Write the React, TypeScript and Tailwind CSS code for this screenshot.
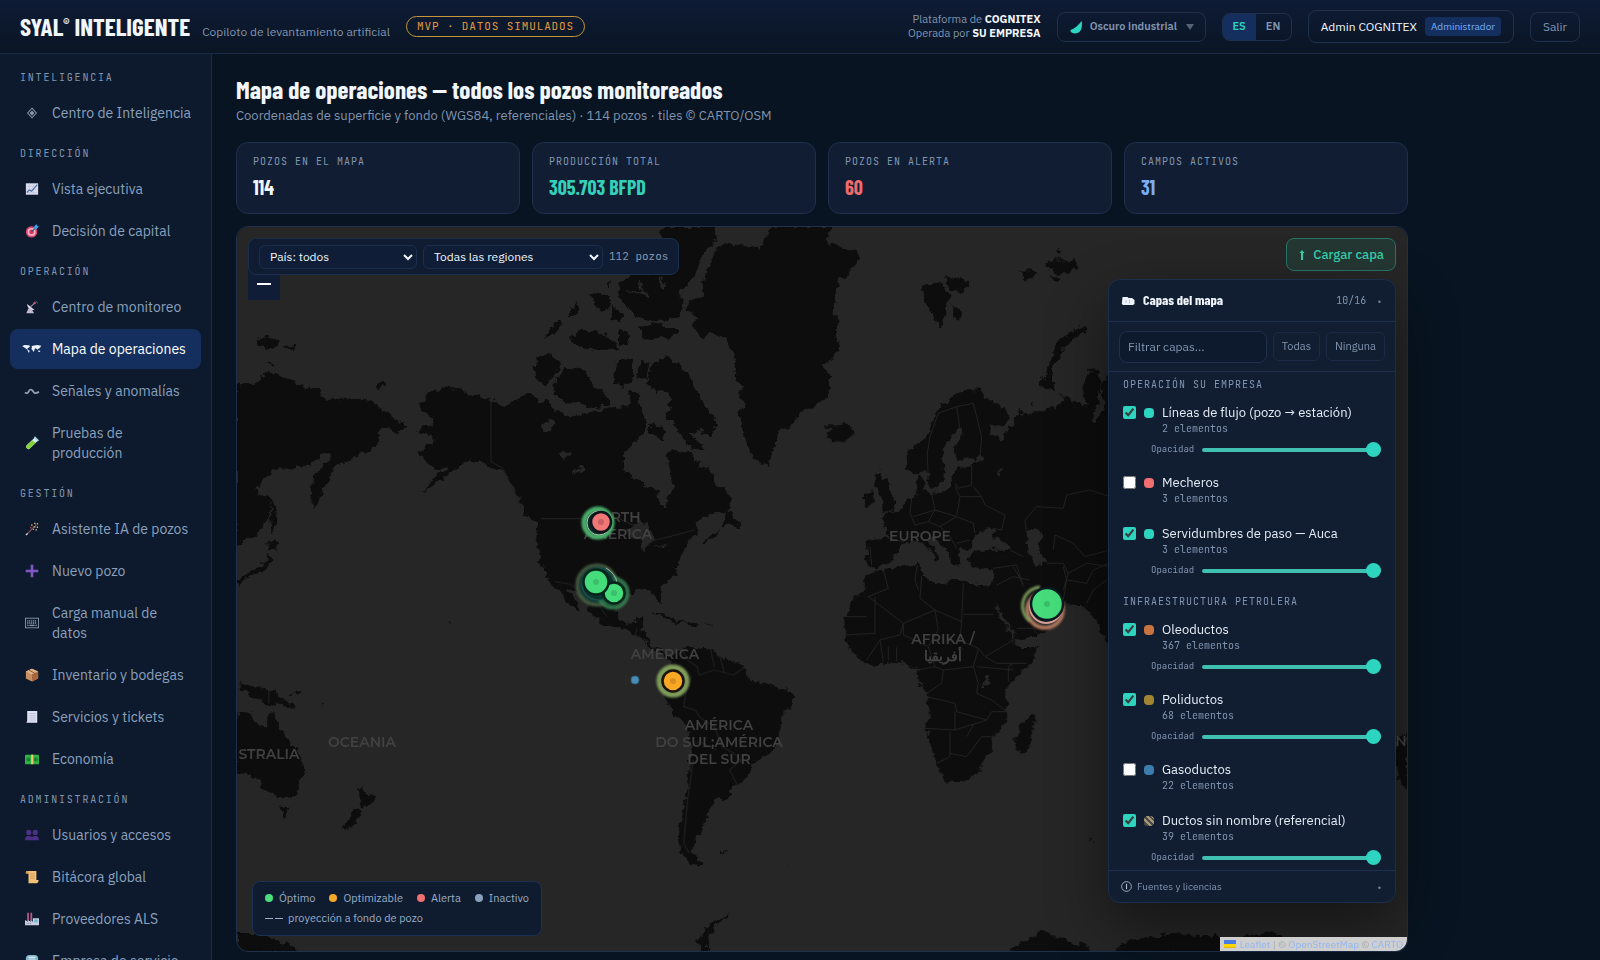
import React from 'react';

const sans = "font-['IBM_Plex_Sans','Roboto','Open_Sans',sans-serif]";
const mono = "font-['JetBrains_Mono','DejaVu_Sans_Mono','Liberation_Mono',monospace]";
const condensed = "font-['Barlow_Condensed','Roboto_Condensed','Liberation_Sans_Narrow','Roboto',sans-serif]";

/* ---------- Sidebar icons ---------- */

const icons: Record<string, React.ReactNode> = {
  diamond: (
    <g>
      <path d="M8 2.5 13 8 8 13.5 3 8Z" fill="none" stroke="#8494ab" strokeWidth="1.2" />
      <path d="M8 5 10.8 8 8 11 5.2 8Z" fill="#8494ab" />
    </g>
  ),
  chart: (
    <g>
      <rect x="1" y="1.5" width="14" height="13" fill="#dcdff0" />
      <path d="M1 5h14M1 8.500h14M1 12h14M5 1.500v13M9.500 1.500v13" stroke="#b9c0dc" strokeWidth=".6" />
      <path d="m2 12 3-3 2.500 1.500L14 3" fill="none" stroke="#4b6d9e" strokeWidth="1.300" />
    </g>
  ),
  target: (
    <g>
      <circle cx="7.500" cy="9" r="6.500" fill="#e5446d" />
      <circle cx="7.500" cy="9" r="4.500" fill="#f7b8c8" />
      <circle cx="7.500" cy="9" r="2.700" fill="#d8345f" />
      <path d="m7.500 9 4.500-4.500" stroke="#35506e" strokeWidth="1.200" />
      <path d="m10.500 5.500.5-3L13 .8l.6 1.600 1.700.6L13.500 5Z" fill="#3f9be6" stroke="#3f9be6" />
    </g>
  ),
  dish: (
    <g>
      <path d="M2.500 4.500c0 4.500 3.500 7.500 8.500 7L2.500 4.500Z" fill="#e0dae8" />
      <path d="M4 9.500 1.500 15h9L8 11Z" fill="#c4bbd2" />
      <path d="m6 8 5-4.500" stroke="#8f86a3" strokeWidth="1.300" />
      <circle cx="11" cy="3.500" r="1.400" fill="#c25a6b" />
      <path d="M12 1a4 4 0 0 1 2.500 3" stroke="#4d6281" fill="none" />
    </g>
  ),
  worldmap: (
    <g fill="#eaf1fb" transform="translate(-1.500 0) scale(1.150 1)">
      <path d="M-1.500 4.500 1 3.500l4 .2 1.500 1L5 6.500 3.500 7.500l1 1.500 1.500 1-.8 2.500-1-2-.6-2L1 6.500Z" />
      <path d="M8 4.500 10.500 4l3-.7 4 1-1 1.700-1 1.500-1 .2-.8 1.200-1.500-1.500-1-.2-.5 2.300-1 1.800-1-2.200L7.500 8l.6-1.500Z" />
      <path d="m14.500 9.800 2 .2-.3 1.500-1.700-.3Z" />
    </g>
  ),
  wave: <path d="M0 9.500c2 2 3.500.8 4.300-1.200S7.500 5.500 9 8s2.500 3.500 7 1" fill="none" stroke="#8fa0b8" strokeWidth="2" />,
  tube: (
    <g>
      <path d="M11.500 1.500 15 5 5.500 14.200a2.200 2.200 0 0 1-3.200 0l-.4-.4a2.200 2.200 0 0 1 0-3.200Z" fill="#d5ecef" />
      <path d="M8.500 4.800 12 8l-6.500 6.200a2.200 2.200 0 0 1-3.200 0l-.4-.4a2.200 2.200 0 0 1 0-3.200Z" fill="#86d13e" />
      <path d="m10.800 1 4.600 4.600" stroke="#9fd0e8" strokeWidth="1.800" />
    </g>
  ),
  wand: (
    <g>
      <path d="m1.500 14.500 9-9" stroke="#7a4b52" strokeWidth="1.500" />
      <path d="m1 15 2-2" stroke="#d4d4dc" strokeWidth="1.600" />
      <path d="M7 3.500h1.600M10.500 1.500h1.500M13.500 2.200H15M10 5.500h2M13.500 6h1.400M12 9h1.500M9 8.500h1" stroke="#f1c27a" strokeWidth="1.500" />
      <path d="M11.500 3.500h1.500M6 6.500h1.200" stroke="#d9576a" strokeWidth="1.300" />
    </g>
  ),
  plus: <path d="M8 .8v14.400M.8 8h14.400" stroke="#8057c4" strokeWidth="3" />,
  keyboard: (
    <g fill="none" stroke="#8a9bb2">
      <rect x=".5" y="2.500" width="15" height="11" />
      <path d="M2.500 5.500h11M2.500 8h11" strokeDasharray="1.400 .8" strokeWidth="1.500" />
      <path d="M2.500 10.700H4M5 10.700h6M12 10.700h1.500" strokeWidth="1.300" />
    </g>
  ),
  box: (
    <g>
      <path d="m8 .8 7 3.200v8L8 15.500 1 12V4Z" fill="#c98f63" />
      <path d="m8 .8 7 3.200L8 7.300 1 4Z" fill="#e0b28a" />
      <path d="M8 7.300 15 4v8L8 15.500Z" fill="#a8673f" />
      <path d="m4.500 2.500 6.500 3.300v2.500" stroke="#8a5234" fill="none" />
    </g>
  ),
  receipt: (
    <g>
      <path d="M2.500 1h11.500v13.500H1.500l1-2Z" fill="#dbe0f2" />
      <path d="M5 4h7M5 6.500h7M5 9h7M5 11.500h7" stroke="#b3bad2" strokeWidth=".9" />
    </g>
  ),
  money: (
    <g>
      <rect x="0" y="3" width="16" height="11" rx="1" fill="#2fb344" />
      <circle cx="4" cy="8.500" r="2.300" fill="#1c7f31" />
      <circle cx="12.300" cy="8.500" r="2.300" fill="#1c7f31" />
      <path d="M7 3h2.500v11H7Z" fill="#e8c86a" />
    </g>
  ),
  users: (
    <g fill="#4c2f86">
      <circle cx="4.300" cy="5" r="3" />
      <circle cx="11.700" cy="5" r="3" />
      <path d="M0 14c0-4 1.500-5 4.300-5C6 9 7.200 9.500 8 10.500 8.800 9.500 10 9 11.700 9c2.800 0 4.300 1 4.300 5Z" />
    </g>
  ),
  scroll: (
    <g>
      <path d="M1 2.500C1 1.500 2 1 3 1h10v10.500h2.500c0 2-.8 3.500-2 3.500H4V4H1Z" fill="#f3c078" />
      <path d="M6 4.500h5M6 7h5M6 9.500h5" stroke="#c98f4d" strokeWidth=".9" />
      <path d="M1 2.500C1 1.500 2 1 3 1s1.500 1 1 3H1Z" fill="#d99a55" />
    </g>
  ),
  factory: (
    <g>
      <path d="M2.500.8h2V10h-2ZM6.200.8h2V10h-2Z" fill="#b55c88" />
      <path d="M0 15V9l3.200 2V9l3.200 2V9L9 11V7h7v8Z" fill="#c9cfe0" />
      <path d="M10.500 8.500h4v3.500h-4Z" fill="#6fb9d8" />
      <path d="M2 13h5.500" stroke="#6b7390" strokeDasharray="1 1" />
    </g>
  ),
  globe: (
    <g>
      <rect x="1" y="1" width="14" height="14" rx="4" fill="#7fb9cf" />
      <path d="M4 4h8M4 7h8" stroke="#dfeaf0" strokeWidth="1.500" />
    </g>
  ),
};

const Icon: React.FC<{ name: string }> = ({ name }) => (
  <svg viewBox="0 0 16 16" className="w-[14px] h-[14px] overflow-visible" aria-hidden="true">
    {icons[name]}
  </svg>
);

const sections = [
  { title: 'INTELIGENCIA', items: [['diamond', 'Centro de Inteligencia']] },
  { title: 'DIRECCIÓN', items: [['chart', 'Vista ejecutiva'], ['target', 'Decisión de capital']] },
  {
    title: 'OPERACIÓN',
    items: [
      ['dish', 'Centro de monitoreo'],
      ['worldmap', 'Mapa de operaciones'],
      ['wave', 'Señales y anomalías'],
      ['tube', 'Pruebas de\nproducción'],
    ],
  },
  {
    title: 'GESTIÓN',
    items: [
      ['wand', 'Asistente IA de pozos'],
      ['plus', 'Nuevo pozo'],
      ['keyboard', 'Carga manual de\ndatos'],
      ['box', 'Inventario y bodegas'],
      ['receipt', 'Servicios y tickets'],
      ['money', 'Economía'],
    ],
  },
  {
    title: 'ADMINISTRACIÓN',
    items: [
      ['users', 'Usuarios y accesos'],
      ['scroll', 'Bitácora global'],
      ['factory', 'Proveedores ALS'],
      ['globe', 'Empresa de servicio'],
    ],
  },
];

const Sidebar: React.FC = () => (
  <nav className="w-[212px] shrink-0 overflow-hidden border-r border-[#1b2b45] bg-[#0d1a2d] px-[10px] pt-[5px] flex flex-col gap-[2px]">
    {sections.map((section) => (
      <React.Fragment key={section.title}>
        <div className={`${mono} shrink-0 px-[10px] pt-[11px] pb-[5px] text-[10px] leading-4 tracking-[0.18em] text-[#8195b0]`}>
          {section.title}
        </div>
        {section.items.map(([icon, label]) => {
          const active = label === 'Mapa de operaciones';
          return (
            <a
              key={label}
              href="#"
              className={`flex shrink-0 items-center gap-[10px] rounded-lg py-[10px] pr-1 pl-3 text-[14px] leading-5 ${
                active ? 'bg-[#142f5e] text-white' : 'text-[#8ba0bd]'
              }`}
            >
              <span className="flex w-5 shrink-0 justify-center">
                <Icon name={icon} />
              </span>
              <span className="whitespace-pre-line">{label}</span>
            </a>
          );
        })}
      </React.Fragment>
    ))}
  </nav>
);

/* ---------- Header ---------- */

const Header: React.FC = () => (
  <header className="flex h-[54px] shrink-0 items-center gap-4 border-b border-[#1b2b45] bg-linear-to-b from-[#0e1b35] to-[#0a1524] px-5">
    <div className="flex items-baseline gap-3 pb-[2px]">
      <span className={`${condensed} text-[25px] leading-8 font-bold text-[#f1f6fd]`}>
        SYAL<sup className="top-[-8px] text-[14px]">®</sup> INTELIGENTE
      </span>
      <span className="text-[12px] text-[#8195b0]">Copiloto de levantamiento artificial</span>
    </div>
    <span className={`${mono} rounded-full border border-[#c8963a] px-[10px] text-[11px] leading-[19px] tracking-[0.08em] text-[#e09a3e]`}>
      MVP · DATOS SIMULADOS
    </span>
    <div className="ml-auto flex items-center gap-4">
      <div className="pb-[2px] text-right text-[11px] leading-[14px] text-[#8195b0]">
        Plataforma de <b className="text-[#f1f6fd]">COGNITEX</b>
        <br />
        Operada por <b className="text-[#f1f6fd]">SU EMPRESA</b>
      </div>
      <label className="flex h-[30px] items-center rounded-lg border border-[#1f304c] px-[11px]">
        <svg viewBox="0 0 14 14" className="mr-[7px] h-[14px] w-[14px]" aria-hidden="true">
          <path d="M12.500.8C13.700 5 13 13.500 6.500 13.500 3 13.500 1.200 12 1.500 10 4 9.500 10 5.500 12.500.8Z" fill="#2dd4bf" />
        </svg>
        <select aria-label="Tema" className="appearance-none bg-transparent text-[11px] font-semibold text-[#8195b0]">
          <option>Oscuro industrial</option>
        </select>
        <svg viewBox="0 0 8 6" className="ml-2 h-[6px] w-2" aria-hidden="true">
          <path d="M0 0h8L4 6Z" fill="#566377" />
        </svg>
      </label>
      <div className="flex h-7 overflow-hidden rounded-lg border border-[#1f304c] text-[11px] font-semibold">
        <button className="w-[33px] bg-[#142f5e] text-[#2dd4bf]">ES</button>
        <button className="w-[35px] text-[#8195b0]">EN</button>
      </div>
      <button className="flex h-[33px] items-center gap-2 rounded-lg border border-[#1f304c] px-3 text-[12px] text-[#f1f6fd]">
        Admin COGNITEX
        <span className="rounded bg-[#142f5e] px-[6px] text-[10px] leading-[19px] text-[#7cacf8]">Administrador</span>
      </button>
      <button className="h-[30px] rounded-lg border border-[#1f304c] px-3 text-[12px] text-[#8195b0]">Salir</button>
    </div>
  </header>
);

/* ---------- Map drawing ---------- */

interface Tile {
  transform: string;
  land: string[];
  water?: string[];
  borders?: string[];
}

const tiles: Tile[] = [
  {
    transform: 'translate(236 220) scale(.3333)',
    land: [
      // eastern Siberia, Kamchatka, Japan
      'M0 495 30 490 80 485 85 460 120 458 165 480 200 500 245 505 265 535 280 560 275 540 345 535 400 540 440 570 480 600 515 618 490 638 440 622 428 650 425 680 380 700 345 720 300 735 285 770 265 800 236 868 228 830 230 780 250 750 290 700 262 698 230 730 190 745 120 745 85 775 55 810 80 825 105 835 95 900 60 950 15 970 0 975Z',
      'M106 835 118 860 120 930 108 945 104 900Z',
      'M92 968 128 965 118 990 95 990ZM98 995 105 1020 85 1052 40 1068 5 1100 0 1078 50 1050 85 1030Z',
      'M65 355 90 348 130 358 128 380 100 388 68 380ZM148 374 180 380 170 390 150 384ZM95 425 120 432 112 440ZM420 497 440 487 452 494 430 504Z',
      // Alaska and Canada mainland
      'M550 562 575 520 635 500 700 520 765 540 810 555 840 540 875 520 910 540 940 545 960 570 1000 590 1050 580 1100 570 1140 560 1175 560 1190 540 1170 520 1200 515 1210 560 1230 600 1225 640 1195 665 1165 700 1160 740 1185 770 1230 800 1265 810 1270 850 1290 865 1300 830 1315 800 1305 760 1290 705 1310 690 1340 695 1370 700 1380 725 1410 750 1417 735 1440 790 1488 835 1480 870 1440 880 1395 890 1370 930 1335 990 1320 1020 1304 1050 1280 1080 1270 1110 960 1110 920 1040 905 1000 905 910 870 880 850 830 820 780 790 745 740 730 700 715 670 740 640 765 560 815 600 770 640 740 600 750 575 730 550 700 570 680 590 670 590 650 545 632 570 615 600 610 580 590Z',
      'M1473 868 1517 920 1462 915ZM1400 965 1450 930 1440 948 1395 975Z',
      // Arctic archipelago
      'M905 410 935 402 970 430 965 455 930 495 895 470Z',
      'M950 490 990 440 1050 450 1075 500 1110 520 1125 555 1080 565 1020 550 990 550 960 520Z',
      'M1000 350 1045 330 1090 340 1120 350 1150 385 1100 390 1040 385 1010 370Z',
      'M925 345 955 310 980 298 975 325 940 350ZM1000 265 1028 250 1025 280 1000 292ZM1068 220 1110 225 1125 260 1100 275 1075 255ZM1130 260 1160 280 1150 305 1120 290ZM1110 185 1125 180 1125 205Z',
      'M1150 330 1180 335 1175 375 1150 370ZM1210 320 1250 310 1330 330 1300 355 1220 355Z',
      'M1140 425 1185 420 1190 470 1160 500 1135 490ZM1215 420 1240 430 1230 480 1205 470ZM1245 430 1290 420 1300 480 1260 520 1235 490Z',
      'M1270 40 1290 22 1432 22 1445 55 1410 90 1390 130 1360 190 1330 215 1345 250 1330 290 1270 305 1200 290 1150 230 1145 195 1200 160 1290 155 1300 90Z',
      'M1275 410 1330 430 1370 490 1395 540 1440 610 1425 650 1390 630 1360 640 1412 690 1370 690 1330 640 1310 600 1290 590 1310 540 1270 490Z',
      'M1240 610 1280 625 1285 660 1240 640Z',
    ],
    water: [
      'M915 615 940 600 960 610 950 630 920 635ZM970 700 1000 690 1008 705 980 716Z',
      'M1010 755 1045 740 1050 746 1015 762ZM1120 830 1130 850 1140 870 1130 850Z',
      'M1205 180 1212 178 1235 230 1228 235ZM1270 170 1278 168 1290 210 1282 212ZM1160 215 1200 210 1240 220 1200 220Z',
      'M1170 930 1210 900 1245 930 1265 960 1235 975 1220 1000 1215 960 1180 945ZM1240 985 1290 975 1285 985Z',
    ],
    borders: ['M765 540V725L800 745 860 870', 'M915 896H1150L1200 920 1260 960 1320 945 1375 930'],
  },
  {
    transform: 'translate(520 490) scale(.3333)',
    land: [
      'M0 30 20 70 50 100 60 120 55 190 75 240 105 275 125 310 165 360 180 364 150 310 122 280 150 290 180 310 205 340 215 370 240 395 290 410 330 425 345 435 365 445 390 472 425 480 400 470 390 460 380 430 355 420 370 410 375 378 350 380 345 400 320 405 295 385 290 350 300 315 335 315 345 300 380 300 405 310 415 342 428 342 418 310 420 290 445 270 470 250 465 240 480 210 500 160 530 130 520 60 300 40Z',
      'M395 368 430 370 470 392 500 395 475 400 440 385ZM500 398 540 400 530 410 505 408ZM560 406 572 407 566 411Z',
    ],
    borders: ['M105 275 150 282 190 310 240 350 260 380', 'M345 435 352 415M370 445 388 455'],
  },
  {
    transform: 'translate(236 560) scale(.3827 .3333)',
    land: [
      'M1092 258 1120 275 1140 290 1165 265 1180 258 1240 268 1260 290 1300 305 1330 320 1340 355 1400 375 1450 400 1455 430 1425 470 1420 540 1400 575 1355 600 1345 640 1310 675 1290 670 1290 710 1250 720 1245 745 1230 760 1225 800 1205 830 1190 870 1222 918 1190 915 1165 880 1155 840 1170 740 1185 640 1190 560 1180 510 1150 470 1120 410 1130 370 1115 340 1140 330 1135 300Z',
      'M0 458 40 460 50 490 80 500 95 450 110 500 150 560 178 600 180 630 150 710 110 712 70 680 50 650 0 640ZM115 740 140 742 130 770Z',
      'M10 370 40 378 90 388 120 410 155 445 120 436 80 430 40 405 10 385ZM140 405 172 392 160 404Z',
      'M325 678 345 705 365 710 340 742 326 735ZM318 745 332 752 300 802 276 805 290 780Z',
      'M0 1120 60 1120 130 1150 165 1175H0Z',
      'M1220 1175 1205 1140 1240 1090 1295 1058 1250 1100 1230 1140 1235 1175ZM1265 870 1282 872 1268 878ZM555 182 562 187 556 190ZM225 435 232 440 228 442ZM1438 905 1448 915 1442 912Z',
    ],
    borders: [
      'M1165 265 1180 300 1205 320 1210 345 1250 330 1300 345 1330 320M1190 348 1175 400 1170 440 1200 450 1215 475 1250 500 1270 560 1300 580 1320 600 1290 630 1310 675',
      'M1190 560 1210 545 1255 570M1195 600 1180 720 1170 850 1185 880M1240 268 1250 320M1265 290 1275 335',
      'M86 388V430',
    ],
  },
  {
    transform: 'translate(680 220) scale(.3333)',
    land: [
      // Greenland
      'M275 22H450L445 55 430 65 470 75 500 90 535 95 530 130 495 165 475 185 465 230 460 280 480 300 465 330 480 380 450 420 420 440 450 470 450 510 440 530 400 565 360 575 345 610 295 635 280 690 262 738 220 710 200 670 185 630 180 580 195 550 170 520 190 500 170 480 160 400 140 360 100 340 60 350 35 310 60 290 18 270 25 245 75 225 70 180 90 140 110 80 150 70 200 75 245 85 255 50Z',
      'M435 620 455 632 440 650 475 670 517 645 515 620 490 612 460 620Z',
      'M728 195 785 188 810 230 795 280 778 327 755 280 735 240ZM795 170 865 180 850 218 810 208ZM815 250 846 285 825 298Z',
      'M1020 155 1060 150 1070 165 1045 178ZM1100 130 1130 112 1160 130 1190 118 1192 145 1140 165 1110 150ZM1115 170 1140 175 1125 185ZM1130 90H1140V95H1130Z',
      'M1080 490 1110 430 1130 370 1180 330 1215 318 1222 332 1170 365 1140 400 1120 440 1115 480 1125 510 1095 505Z',
      'M580 760 602 755 620 790 648 850 640 870 600 875 610 840 590 800ZM552 825 580 815 585 850 555 860Z',
      // Europe and Russia
      'M680 700 700 680 740 650 760 600 780 560 820 530 860 508 900 510 905 530 960 555 990 590 975 620 935 610 930 640 960 662 975 640 1000 610 1015 570 1030 590 1080 570 1130 560 1160 545 1135 520 1180 545 1225 560 1205 510 1225 455 1255 450 1262 500 1250 560 1230 605 1250 610 1270 570 1265 490 1300 450V1130H900L945 1092 943 1045 880 1040 865 1020 880 995 940 990 990 990 972 962 930 945 945 925 900 930 880 950 870 985 835 990 840 1030 820 1035 800 990 760 945 738 958 782 1012 760 1032 768 1010 728 970 700 960 660 972 650 1000 620 1030 590 1045 560 1035 558 965 625 955 620 920 598 900 620 880 660 870 680 840 712 820 705 785 720 765 735 780 730 812 755 822 790 815 820 800 815 775 830 745 880 735 900 722 880 712 830 722 825 690 850 645 845 625 825 635 785 690 792 740 790 775 765 812 745 795 738 745 705 768 682 745Z',
      'M1048 548 1060 545 1058 558Z',
      'M552 1130 560 1100 590 1050 620 1055 720 1035 725 1070 760 1090 800 1090 830 1080 900 1100 940 1095V1130Z',
    ],
    water: ['M1040 940 1080 920 1090 950 1072 980 1100 1030 1065 1037 1050 1000 1038 970ZM890 705 912 712 905 728 892 720ZM955 750 965 752 962 768Z'],
    borders: [
      'M745 780 742 700 750 650 775 580 830 560 840 625M830 560 880 550 890 590 905 650 900 715M840 745 875 735 875 795 835 805 825 790',
      'M695 835 690 880 705 915M755 822 765 870 700 890M765 870 830 890 840 830 825 800M840 830 905 830 915 855 975 885 965 930 940 925M830 890 880 910 885 940M705 915 745 905 765 870M745 905 780 920 830 890M905 830 880 800M625 955 670 965M570 980 575 1035M780 920 810 950 830 985',
      'M1040 940 1035 900 1070 860 1150 865 1160 825 1230 810 1290 830M1100 1030 1150 1030 1165 1060 1150 1110M1120 990 1125 945 1180 970 1215 1010 1290 990M990 990 1030 1010M940 1045 1010 1035 1030 1100M870 960 830 970M1165 1060 1220 1030 1290 1040',
      'M712 1035 705 1080 715 1110',
    ],
  },
  {
    transform: 'translate(800 560) scale(.3333)',
    land: [
      'M195 60 200 40 225 35 250 30 330 15 360 15 365 50 400 65 440 80 450 60 490 70 555 80 575 110 600 170 640 240 650 262 715 262 690 310 650 350 615 390 620 430 620 490 575 530 575 570 550 600 540 630 500 660 435 670 420 620 400 590 395 550 375 505 390 460 380 400 355 365 355 330 325 315 290 305 215 320 180 300 145 260 130 220 135 170 160 120 190 90Z',
      'M580 25H940V290L905 210 880 170 850 135 800 132 760 112 700 85 670 72 700 110 722 128 795 150 770 195 715 225 650 245 630 200 600 150 567 95 580 60Z',
      'M700 465 706 480 680 577 655 580 646 550 655 500Z',
      'M625 1180 660 1145 700 1135 730 1110 760 1125 800 1145 865 1155 870 1180ZM865 838 876 840 868 846Z',
      'M940 1180 980 1145 1130 1118 1160 1128 1250 1125 1280 1140 1400 1118 1480 1135 1700 1180Z',
      // east coast of Asia past the layer panel
      'M1788 535 1822 520V690L1800 660 1788 620Z',
    ],
    water: ['M545 360 570 352 572 372 550 376Z'],
    borders: [
      'M205 110 265 85 250 30M205 110 310 190 405 150 360 115 365 50M225 110V220L135 225M135 170H200M310 190 300 225 240 240 200 300M405 150 485 185 490 70M490 163 580 163M485 185 480 240 535 265 555 290 640 240',
      'M405 150 415 210 385 260 405 320 355 330M310 190 310 225 385 260M405 320 430 330 520 320 535 265M430 330 425 370 380 400M520 320 535 370 530 400 575 420 620 455H575L560 480 470 455 465 430 380 410M465 455 465 510 375 505M465 510 545 485 560 480M450 515V590L410 610M450 580 500 590 545 530 575 530M625 365V320L640 310M530 320 640 330M555 290 590 310 680 310M500 530 520 495M240 240 250 305M265 260V300M290 262V305',
      'M590 75 640 50 690 60M650 205 700 205 715 225M670 72 640 20M790 120 800 60 790 20M800 60 860 70 880 30 925 10M860 130 880 90 920 60',
    ],
  },
];

const mapLabels = [
  { x: 614, y: 522, text: 'NORTH' },
  { x: 618, y: 539, text: 'AMERICA' },
  { x: 665, y: 659, text: 'AMERICA' },
  { x: 920, y: 541, text: 'EUROPE' },
  { x: 943, y: 644, text: 'AFRIKA /' },
  { x: 943, y: 661, text: 'أفريقيا' },
  { x: 719, y: 730, text: 'AMÉRICA' },
  { x: 719, y: 747, text: 'DO SUL;AMÉRICA' },
  { x: 719, y: 764, text: 'DEL SUR' },
  { x: 362, y: 747, text: 'OCEANIA' },
  { x: 269, y: 759, text: 'STRALIA' },
  { x: 1401, y: 746, text: 'N' },
];

const WorldMap: React.FC = () => (
  <svg viewBox="237 227 1170 724" preserveAspectRatio="xMidYMid slice" className="block h-full w-full bg-[#262626]" role="img" aria-label="Mapa mundial de pozos">
    <defs>
      <filter id="coast" x="0" y="0" width="100%" height="100%">
        <feTurbulence type="fractalNoise" baseFrequency=".14" numOctaves="3" seed="4" />
        <feDisplacementMap in="SourceGraphic" scale="9" xChannelSelector="R" yChannelSelector="G" />
      </filter>
      <filter id="glow" x="-30%" y="-30%" width="160%" height="160%">
        <feGaussianBlur stdDeviation="1" />
      </filter>
    </defs>
    <g filter="url(#coast)">
      {tiles.map((tile) => (
        <g key={tile.transform} transform={tile.transform}>
          {tile.land.map((d) => <path key={d} d={d} fill="#090909" />)}
        </g>
      ))}
      {tiles.map((tile) => (
        <g key={tile.transform} transform={tile.transform}>
          {tile.water?.map((d) => <path key={d} d={d} fill="#262626" />)}
        </g>
      ))}
    </g>
    {tiles.map((tile) => (
      <g key={tile.transform} transform={tile.transform}>
        {tile.borders?.map((d) => <path key={d} d={d} fill="none" stroke="#232323" strokeWidth="3" />)}
      </g>
    ))}
    <g className="font-['Montserrat','Inter',sans-serif] text-[14px] font-semibold" fill="#414141" textAnchor="middle">
      {mapLabels.map((l) => <text key={`${l.x}-${l.y}`} x={l.x} y={l.y}>{l.text}</text>)}
    </g>
    {/* Canada */}
    <circle cx="598" cy="523" r="14" fill="#164a35" stroke="#4aad6a" strokeWidth="5" filter="url(#glow)" />
    <circle cx="599" cy="523" r="12" fill="#0f2a22" stroke="#a9c9b0" strokeWidth="1" />
    <circle cx="601" cy="522" r="10" fill="#f27777" stroke="#10151d" strokeWidth="2.500" />
    <circle cx="601" cy="522" r="3" fill="#c95f62" />
    {/* Permian and Gulf */}
    <circle cx="597" cy="585" r="20" fill="#12403a" stroke="#4b6344" strokeWidth="3" opacity=".9" filter="url(#glow)" />
    <circle cx="613" cy="593" r="15" fill="#1d5a3c" stroke="#3a8453" strokeWidth="3" opacity=".9" filter="url(#glow)" />
    <circle cx="598" cy="584" r="16" fill="#0d332f" stroke="#175148" strokeWidth="1.500" />
    <path d="M606 568q10 6 11 15" fill="none" stroke="#9bb9ae" />
    <circle cx="614" cy="593" r="10.500" fill="#45dd7c" stroke="#07251b" strokeWidth="2.500" />
    <circle cx="614" cy="593" r="3" fill="#3bbd6a" />
    <circle cx="596" cy="582" r="12.500" fill="#45dd7c" stroke="#07251b" strokeWidth="2.500" />
    <circle cx="596" cy="582" r="3" fill="#3bbd6a" />
    {/* Ecuador */}
    <circle cx="673" cy="681" r="14" fill="#58653a" stroke="#7f9d5a" strokeWidth="5" filter="url(#glow)" />
    <circle cx="673" cy="681" r="10.500" fill="#f9a825" stroke="#1a1210" strokeWidth="2.500" />
    <circle cx="673" cy="681" r="3" fill="#d98e1e" />
    <circle cx="635" cy="680" r="4" fill="#4a8db5" stroke="#336a8c" />
    {/* Gulf states */}
    <circle cx="1045" cy="610" r="18" fill="#182c2a" stroke="#b77c62" strokeWidth="3.500" filter="url(#glow)" />
    <path d="M1030 621a19 19 0 0 1 10-34" fill="none" stroke="#7d9c5b" strokeWidth="3" filter="url(#glow)" />
    <circle cx="1046" cy="607" r="16" fill="none" stroke="#d99a94" strokeWidth="2" />
    <circle cx="1047" cy="604" r="16" fill="#45dd7c" stroke="#0b1a22" strokeWidth="2.500" />
    <circle cx="1047" cy="604" r="3" fill="#3bbd6a" />
  </svg>
);

/* ---------- Layer panel ---------- */

interface Layer {
  name: string;
  count: number;
  color: string;
  on: boolean;
}

const layerGroups: { title: string; layers: Layer[] }[] = [
  {
    title: 'OPERACIÓN SU EMPRESA',
    layers: [
      { name: 'Líneas de flujo (pozo → estación)', count: 2, color: 'bg-[#2dd4bf]', on: true },
      { name: 'Mecheros', count: 3, color: 'bg-[#f06f6f]', on: false },
      { name: 'Servidumbres de paso — Auca', count: 3, color: 'bg-[#2dd4bf]', on: true },
    ],
  },
  {
    title: 'INFRAESTRUCTURA PETROLERA',
    layers: [
      { name: 'Oleoductos', count: 367, color: 'bg-[#c8743f]', on: true },
      { name: 'Poliductos', count: 68, color: 'bg-[#a08632]', on: true },
      { name: 'Gasoductos', count: 22, color: 'bg-[#3d7dae]', on: false },
      {
        name: 'Ductos sin nombre (referencial)',
        count: 39,
        color: 'bg-[repeating-linear-gradient(45deg,#a89878_0_2px,#4d4b48_2px_4px)]',
        on: true,
      },
    ],
  },
];

const slider =
  'm-0 h-1 min-w-0 flex-1 appearance-none rounded-full bg-[#3fc0b0] [&::-webkit-slider-thumb]:h-[15px] [&::-webkit-slider-thumb]:w-[15px] [&::-webkit-slider-thumb]:appearance-none [&::-webkit-slider-thumb]:rounded-full [&::-webkit-slider-thumb]:bg-[#2dd4bf]';

const LayerItem: React.FC<{ layer: Layer }> = ({ layer }) => (
  <div className={`pt-[6px] ${layer.on ? 'pb-[9px]' : 'pb-3'}`}>
    <label className="flex items-center gap-2 text-[13px] leading-[17px] text-[#e4ecf7]">
      <input type="checkbox" defaultChecked={layer.on} className="m-0 h-[13px] w-[13px] shrink-0 accent-[#2dd4bf]" />
      <span className={`h-[10px] w-[10px] shrink-0 rounded ${layer.color}`} />
      <span className="whitespace-nowrap">{layer.name}</span>
    </label>
    <div className={`${mono} pl-[39px] text-[10px] leading-4 text-[#8195b0]`}>{layer.count} elementos</div>
    {layer.on && (
      <label className={`${mono} mt-[3px] flex h-[19px] items-center gap-2 pl-7 text-[9px] text-[#8195b0]`}>
        Opacidad
        <input type="range" defaultValue={100} className={slider} />
      </label>
    )}
  </div>
);

const LayerPanel: React.FC = () => (
  <aside className="absolute top-[52px] right-[11px] bottom-[48px] flex w-[288px] flex-col rounded-xl border border-[#1b2f4c] bg-[#111d30] shadow-[0_24px_60px_rgba(0,0,0,0.45)]">
    <div className="flex h-[42px] shrink-0 items-center border-b border-[#1f304c] px-3">
      <svg viewBox="0 0 14 10" className="mr-2 h-[10px] w-[14px]" aria-hidden="true">
        <path d="M1.500 1h5l1 1h3.500l2.500 2v4l-1.500 1H2L.8 8Z" fill="#eef4fc" />
        <path d="M5 4v3M8.500 3.500v4" stroke="#b7c4d8" />
      </svg>
      <h2 className={`${condensed} pb-[2px] text-[14px] font-bold text-[#f1f6fd]`}>Capas del mapa</h2>
      <span className={`${mono} ml-auto text-[10px] text-[#8195b0]`}>10/16</span>
      <span className="mr-[2px] ml-3 text-[8px] text-[#8195b0]">▪</span>
    </div>
    <div className="flex h-[50px] shrink-0 items-center gap-[6px] border-b border-[#1f304c] px-[10px]">
      <input
        type="text"
        aria-label="Filtrar capas"
        placeholder="Filtrar capas..."
        className="h-8 min-w-0 flex-1 rounded-lg border border-[#1f304c] bg-[#0d1a2d] px-2 text-[12px] placeholder:text-[#8195b0]"
      />
      <button className="h-[29px] rounded-md border border-[#1b2b45] px-2 text-[11px] text-[#8195b0]">Todas</button>
      <button className="h-[29px] rounded-md border border-[#1b2b45] px-2 text-[11px] text-[#8195b0]">Ninguna</button>
    </div>
    <div className="min-h-0 flex-1 overflow-hidden px-[14px]">
      {layerGroups.map((group) => (
        <section key={group.title}>
          <h3 className={`${mono} py-[5px] text-[10px] leading-4 tracking-[0.1em] text-[#8195b0]`}>{group.title}</h3>
          {group.layers.map((layer) => <LayerItem key={layer.name} layer={layer} />)}
        </section>
      ))}
    </div>
    <div className="flex h-8 shrink-0 items-center border-t border-[#1f304c] px-3 text-[10px] text-[#8195b0]">
      <svg viewBox="0 0 12 12" className="mr-[5px] h-[11px] w-[11px]" fill="none" stroke="#a9b8cc" aria-hidden="true">
        <circle cx="6" cy="6" r="5.300" />
        <path d="M6 3v6" strokeWidth="1.300" />
      </svg>
      Fuentes y licencias
      <span className="mr-[2px] ml-auto text-[8px]">▪</span>
    </div>
  </aside>
);

/* ---------- Page ---------- */

const stats = [
  { label: 'POZOS EN EL MAPA', value: '114', color: 'text-[#f1f6fd]' },
  { label: 'PRODUCCIÓN TOTAL', value: '305.703 BFPD', color: 'text-[#34d0ba]' },
  { label: 'POZOS EN ALERTA', value: '60', color: 'text-[#f06b6b]' },
  { label: 'CAMPOS ACTIVOS', value: '31', color: 'text-[#7cacf8]' },
];

const legend = [
  ['Óptimo', 'bg-[#4ade80]'],
  ['Optimizable', 'bg-[#f5a92a]'],
  ['Alerta', 'bg-[#f06f6f]'],
  ['Inactivo', 'bg-[#8ba0bd]'],
];

const mapSelect = 'h-6 rounded-md border border-[#1b2f4c] bg-[#0f1e36] px-[6px] text-[12px] text-[#f1f6fd]';

const MapCard: React.FC = () => (
  <div className="relative mt-3 h-[calc(100vh-234px)] min-h-[480px] rounded-xl border border-[#1f304c]">
    <div className="h-full overflow-hidden rounded-xl">
      <WorldMap />
    </div>
    <button aria-label="Alejar" className="absolute top-[41px] left-[11px] h-8 w-8 bg-[#0f1e36] text-white">
      <svg viewBox="0 0 14 2" className="mx-auto h-[2px] w-[14px]"><path d="M0 1h14" stroke="currentColor" strokeWidth="2" /></svg>
    </button>
    <div className="absolute top-[11px] left-[11px] flex h-[37px] items-center gap-[6px] rounded-lg border border-[#1b2f4c] bg-[#0f1c31] px-[10px]">
      <select aria-label="País" className={`${mapSelect} w-[158px]`}>
        <option>País: todos</option>
      </select>
      <select aria-label="Región" className={`${mapSelect} w-[180px]`}>
        <option>Todas las regiones</option>
      </select>
      <span className={`${mono} text-[11px] text-[#8195b0]`}>112 pozos</span>
    </div>
    <button className="absolute top-[11px] right-[11px] flex h-[33px] items-center gap-[7px] rounded-lg border border-[#267565] bg-[#253733] px-[11px] text-[13px] font-medium text-[#34d0ac]">
      <svg viewBox="0 0 8 12" className="h-3 w-2" aria-hidden="true"><path d="M4 1 6.500 4H5v7H3V4H1.500Z" fill="currentColor" /></svg>
      Cargar capa
    </button>
    <LayerPanel />
    <div className="absolute bottom-[15px] left-[15px] rounded-lg border border-[#1b3252] bg-[#0f1c30] px-3 pt-[6px] pb-[7px] text-[11px] leading-5 text-[#9badc6]">
      <div className="flex gap-[14px]">
        {legend.map(([label, color]) => (
          <span key={label} className="flex items-center gap-[6px]">
            <span className={`h-2 w-2 rounded-full ${color}`} />
            {label}
          </span>
        ))}
      </div>
      <div className="flex items-center gap-[5px]">
        <span className="flex gap-[2px]">
          <span className="h-px w-2 bg-[#9badc6]" />
          <span className="h-px w-2 bg-[#9badc6]" />
        </span>
        proyección a fondo de pozo
      </div>
    </div>
    <div className="absolute right-0 bottom-0 flex h-[14px] items-center gap-1 rounded-br-xl bg-[#cfcfcf] px-1 text-[10px] text-[#a5a9b0]">
      <svg viewBox="0 0 12 8" className="h-2 w-3" aria-hidden="true">
        <path fill="#4c7be1" d="M0 0h12v4H0z" />
        <path fill="#ffd500" d="M0 4h12v3H0z" />
        <path fill="#e0bc00" d="M0 7h12v1H0z" />
      </svg>
      <span>
        <a href="#" className="text-[#8fb6f2]">Leaflet</a> | © <a href="#" className="text-[#8fb6f2]">OpenStreetMap</a> ©{' '}
        <a href="#" className="text-[#8fb6f2]">CARTO</a>
      </span>
    </div>
  </div>
);

export default function App() {
  return (
    <div className={`${sans} flex h-screen flex-col overflow-hidden bg-[#081421] text-[#e4ecf7]`}>
      <Header />
      <div className="flex min-h-0 flex-1">
        <Sidebar />
        <main className="min-w-0 flex-1 overflow-hidden">
          <div className="max-w-[1220px] px-6 pt-[19px]">
            <h1 className={`${condensed} text-[25px] leading-8 font-bold text-[#f1f6fd]`}>
              Mapa de operaciones — todos los pozos monitoreados
            </h1>
            <p className="mt-px text-[13px] leading-5 text-[#8195b0]">
              Coordenadas de superficie y fondo (WGS84, referenciales) · 114 pozos · tiles © CARTO/OSM
            </p>
            <div className="mt-4 grid grid-cols-4 gap-3">
              {stats.map((stat) => (
                <div key={stat.label} className="rounded-xl border border-[#1f304c] bg-[#101d33] px-4 pt-[11px] pb-[13px]">
                  <div className={`${mono} text-[10px] leading-4 tracking-[0.1em] text-[#8195b0]`}>{stat.label}</div>
                  <div className={`${condensed} mt-1 text-[20px] leading-[26px] font-bold ${stat.color}`}>{stat.value}</div>
                </div>
              ))}
            </div>
            <MapCard />
          </div>
        </main>
      </div>
    </div>
  );
}
